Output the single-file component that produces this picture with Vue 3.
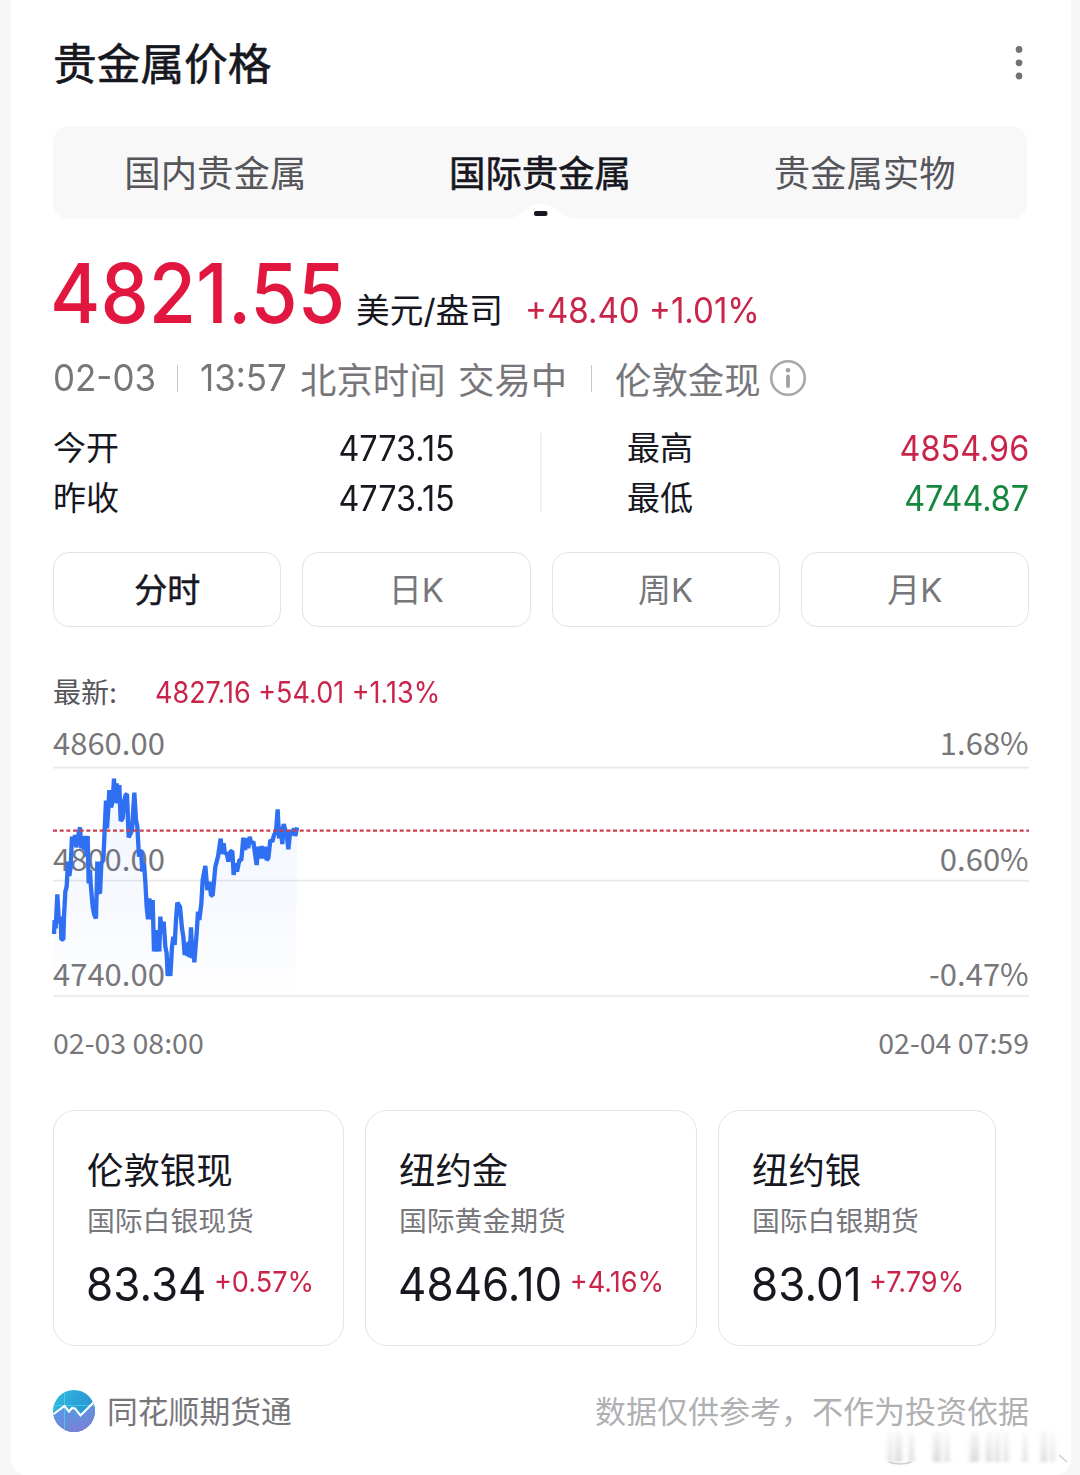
<template>
  <main class="card">
    <header class="head">
      <h1>贵金属价格</h1>
      <svg class="more" width="10" height="36" viewBox="0 0 10 36">
        <circle v-for="y in [4.5, 17.8, 31]" :key="y" cx="5" :cy="y" r="3.4" />
      </svg>
    </header>

    <nav class="tabs">
      <span v-for="tab in tabs" :key="tab" :class="{ active: tab === currentTab }">{{ tab }}</span>
      <svg class="notch" width="72" height="16" viewBox="0 0 72 16">
        <path d="M0 16 C18 15 20 1 36 1 S54 15 72 16Z" fill="#fff" />
        <rect x="29" y="8" width="13.5" height="5" rx="2" fill="#17171f" />
      </svg>
    </nav>

    <section class="price">
      <strong>4821.55</strong>
      <span class="unit">美元/盎司</span>
      <span class="change">+48.40 +1.01%</span>
    </section>

    <section class="meta">
      <span class="date">02-03</span>
      <i></i>
      <span class="clock">13:57</span>
      <span class="zone">北京时间</span>
      <span class="state">交易中</span>
      <i></i>
      <span class="market">伦敦金现</span>
      <svg width="38" height="38" viewBox="0 0 38 38">
        <circle cx="19" cy="19" r="16.8" fill="none" stroke="#a8a8a8" stroke-width="2.6" />
        <circle cx="19" cy="11.2" r="2.3" fill="#a0a0a0" />
        <path d="M19 17.5V27" stroke="#a0a0a0" stroke-width="3.8" stroke-linecap="round" />
      </svg>
    </section>

    <section class="stats">
      <div class="col">
        <p><span>今开</span><b>4773.15</b></p>
        <p><span>昨收</span><b>4773.15</b></p>
      </div>
      <div class="col right">
        <p><span>最高</span><b class="up">4854.96</b></p>
        <p><span>最低</span><b class="down">4744.87</b></p>
      </div>
    </section>

    <nav class="periods">
      <span v-for="p in periods" :key="p" :class="{ active: p === '分时' }">{{ p }}</span>
    </nav>

    <p class="latest"><span>最新:</span><b>4827.16 +54.01 +1.13%</b></p>

    <!-- three chart units to one css pixel -->
    <svg class="chart" width="976" height="290" viewBox="39 0 2928 870">
      <defs>
        <linearGradient id="area" x1="0" y1="0" x2="0" y2="1">
          <stop offset="0" stop-color="#2f6ff2" stop-opacity="0.06" />
          <stop offset="0.6" stop-color="#2f6ff2" stop-opacity="0.04" />
          <stop offset="1" stop-color="#2f6ff2" stop-opacity="0" />
        </linearGradient>
      </defs>
      <path v-for="y in [143, 482, 828]" :key="y" :d="`M39 ${y}H2967`" stroke="#e9e9eb" stroke-width="5" />
      <g class="axis">
        <template v-for="row in axis" :key="row.y">
          <text x="39" :y="row.y">{{ row.price }}</text>
          <text x="2966" :y="row.y" text-anchor="end">{{ row.percent }}</text>
        </template>
      </g>
      <polygon :points="`39,828 ${line} 768,828`" fill="url(#area)" />
      <polyline :points="line" fill="none" stroke="#2f6ff2" stroke-width="13" stroke-linejoin="bevel" />
      <path d="M39 332H2967" stroke="#c9414f" stroke-width="7" stroke-dasharray="12 8" />
    </svg>

    <div class="times"><span>02-03 08:00</span><span>02-04 07:59</span></div>

    <section class="quotes">
      <article v-for="q in quotes" :key="q.name" :style="{ width: q.width + 'px' }">
        <h2>{{ q.name }}</h2>
        <p>{{ q.desc }}</p>
        <div><strong>{{ q.price }}</strong><em>{{ q.change }}</em></div>
      </article>
    </section>

    <footer class="foot">
      <svg width="42" height="42" viewBox="0 0 42 42">
        <defs>
          <linearGradient id="sky" x1="0" y1="0" x2="1" y2="0.5">
            <stop offset="0" stop-color="#32bde0" />
            <stop offset="1" stop-color="#278fd2" />
          </linearGradient>
          <linearGradient id="hill" x1="0.2" y1="0" x2="0.6" y2="1">
            <stop offset="0" stop-color="#4f9fe4" />
            <stop offset="1" stop-color="#7b7fd6" />
          </linearGradient>
          <clipPath id="disc"><circle cx="21" cy="21" r="21" /></clipPath>
        </defs>
        <g clip-path="url(#disc)">
          <path d="M0 0H42V42H0Z" fill="url(#sky)" />
          <path d="M0 25 11 16 16 22 19 18 27 26 42 12V42H0Z" fill="url(#hill)" />
          <path d="M11.5 0V42M0 15.500H42" stroke="#43dce8" stroke-width="1" opacity="0.7" />
          <path d="M0 24.500 11.500 16 16 21.500 19 18 22 18.500 27.500 25.500 41 12" fill="none" stroke="#fff" stroke-width="2.1" />
        </g>
      </svg>
      <span class="brand">同花顺期货通</span>
      <span class="notice">数据仅供参考，不作为投资依据</span>
    </footer>

    <svg class="smudge" width="190" height="40" viewBox="0 0 190 40">
      <defs>
        <filter id="soft"><feGaussianBlur stdDeviation="2 1.4" /></filter>
        <linearGradient id="fade" x1="0" y1="0" x2="0" y2="1">
          <stop offset="0" stop-color="#999" stop-opacity="0.08" />
          <stop offset="1" stop-color="#999" stop-opacity="0.36" />
        </linearGradient>
      </defs>
      <g filter="url(#soft)" fill="url(#fade)">
        <rect v-for="s in stripes" :key="s[0]" :x="s[0]" y="3" :width="s[1]" height="30" />
      </g>
      <path d="M8 33Q19 37 30 33M178 26L186 33" fill="none" stroke="#bbb" stroke-width="1.5" opacity="0.7" />
    </svg>
  </main>
</template>

<script setup>
import { ref } from "vue";

const tabs = ["国内贵金属", "国际贵金属", "贵金属实物"];
const currentTab = ref("国际贵金属");
const periods = ["分时", "日K", "周K", "月K"];

const axis = [
  { y: 105, price: "4860.00", percent: "1.68%" },
  { y: 452, price: "4800.00", percent: "0.60%" },
  { y: 797, price: "4740.00", percent: "-0.47%" },
];

const quotes = [
  { name: "伦敦银现", desc: "国际白银现货", price: "83.34", change: "+0.57%", width: 291 },
  { name: "纽约金", desc: "国际黄金期货", price: "4846.10", change: "+4.16%", width: 332 },
  { name: "纽约银", desc: "国际白银期货", price: "83.01", change: "+7.79%", width: 278 },
];

const line =
  "42,642 44,600 47,625 52,523 57,610 62,590 64,658 70,658 72,590 76,515 80,500 84,425 88,468 92,440 96,350 101,375 105,345 109,382 115,345 120,322 124,385 129,350 132,390 136,348 140,410 143,348 146,490 150,450 152,490 158,560 163,585 168,595 " +
  "172,425 176,515 180,520 184,430 190,420 194,330 198,242 201,325 205,265 208,210 213,262 218,245 222,176 225,248 230,190 233,250 238,195 242,303 248,295 253,240 257,225 261,222 266,352 272,340 276,330 283,218 288,300 292,320 297,410 303,390 307,455 312,430 " +
  "316,485 320,560 324,598 328,535 333,598 338,540 342,694 347,630 350,695 354,640 358,694 361,590 366,640 371,605 376,680 380,700 383,768 387,715 391,768 396,680 400,650 404,675 408,600 412,548 420,560 426,625 430,650 434,705 439,670 442,708 446,665 449,712 453,622 457,715 460,665 463,727 470,640 " +
  "474,575 478,600 484,550 488,480 496,438 502,510 508,485 513,525 518,527 526,440 534,410 542,356 547,402 551,370 555,402 560,398 565,425 571,395 577,393 581,465 586,430 591,455 598,420 604,420 " +
  "610,353 615,390 621,355 625,385 629,350 634,370 640,365 645,400 650,435 655,380 660,415 665,378 670,415 675,380 680,420 685,415 691,360 697,365 702,345 708,335 713,268 717,355 722,320 727,372 731,312 736,330 741,350 745,388 751,330 757,345 762,325 766,348 771,322";

// x offset and width
const stripes = [[7, 4], [14, 7], [28, 5], [52, 8], [64, 4], [89, 9], [105, 6], [114, 5], [123, 4], [142, 4], [160, 6], [170, 3]];
</script>

<style>
body {
  margin: 0;
  background: #f7f7f7;
}
</style>

<style scoped>
.card {
  position: relative;
  box-sizing: border-box;
  width: 1060px;
  height: 1475px;
  margin-left: 11px;
  padding: 0 42px;
  overflow: hidden;
  background: #fff;
  border-radius: 0 0 16px 16px;
  color: #17171f;
  font-family: Inter, "Noto Sans CJK SC", sans-serif;
  white-space: nowrap;
}
h1,
h2,
p {
  margin: 0;
  font-weight: 400;
}
b,
em,
strong {
  font-weight: 400;
  font-style: normal;
}
.head {
  display: flex;
  justify-content: space-between;
  align-items: center;
  height: 126px;
}
h1 {
  padding-top: 3px;
  font-size: 43.7px;
  line-height: 60px;
  -webkit-text-stroke: 0.6px;
}
.more {
  margin-right: 5px;
  fill: #737373;
}
.tabs {
  position: relative;
  display: grid;
  grid-template-columns: repeat(3, 1fr);
  width: 974px;
  height: 93px;
  border-radius: 16px;
  background: #f8f8f8;
  color: #55555a;
  font-size: 36.4px;
  line-height: 96px;
  text-align: center;
}
.tabs .active {
  color: #17171f;
  -webkit-text-stroke: 0.6px;
}
.notch {
  position: absolute;
  left: 452px;
  bottom: 0;
}
.price {
  display: flex;
  align-items: baseline;
  height: 131px;
  line-height: 148px;
}
/* numerals are set slightly condensed */
.price strong,
.change,
.date,
.clock,
.col b,
.latest b,
article div {
  transform: scaleX(0.925);
  transform-origin: left;
}
.price strong {
  width: 306px;
  margin-left: -3px;
  color: #e2173f;
  font-size: 83px;
  font-weight: 500;
}
.unit {
  width: 169px;
  font-size: 33.7px;
}
.change {
  color: #c9254a;
  font-size: 35px;
  transform: scaleX(0.945);
}
.meta {
  display: flex;
  align-items: center;
  height: 56px;
  padding-bottom: 2px;
  color: #77777b;
  font-size: 36.4px;
}
.meta i {
  width: 1px;
  height: 27px;
  margin-right: 1px;
  background: #c8c8c8;
}
.date {
  width: 124px;
  transform: scaleX(0.96);
}
.clock {
  width: 100px;
  margin-left: 21px;
  transform: scaleX(0.96);
}
.zone {
  width: 158px;
}
.state {
  width: 133px;
}
.market {
  margin: 0 8px 0 22px;
}
.stats {
  display: flex;
  margin-top: 15px;
}
.col {
  width: 402px;
  height: 100px;
}
.col p {
  display: flex;
  justify-content: space-between;
  height: 50px;
  font-size: 33px;
  line-height: 50px;
}
.col b {
  font-size: 35px;
  transform-origin: right;
}
.right {
  position: relative;
  margin-left: 172px;
}
.right::before {
  content: "";
  position: absolute;
  left: -87px;
  top: 10px;
  width: 2px;
  height: 79px;
  background: #f0f0f0;
}
.up {
  color: #c9254a;
}
.down {
  color: #15873f;
}
.periods {
  display: grid;
  grid-template-columns: repeat(4, 1fr);
  gap: 21px;
  margin-top: 29px;
}
.periods span {
  box-sizing: border-box;
  height: 75px;
  border: 1px solid #e2e2e4;
  border-radius: 16px;
  color: #77777b;
  font-size: 33px;
  line-height: 74px;
  text-align: center;
}
.periods .active {
  color: #17171f;
  -webkit-text-stroke: 0.5px;
}
.latest {
  display: flex;
  height: 40px;
  margin-top: 46px;
  color: #55555a;
  font-size: 28px;
  line-height: 41px;
}
.latest span {
  width: 102px;
}
.latest b {
  color: #c9254a;
  font-size: 29.5px;
  line-height: 39px;
  transform: scaleX(0.915);
}
.chart {
  display: block;
  margin-top: 7px;
  overflow: visible;
}
.axis {
  fill: #77777b;
  font: 93px "Noto Sans CJK SC", sans-serif;
}
.times {
  display: flex;
  justify-content: space-between;
  height: 40px;
  margin-top: 12px;
  color: #77777b;
  font: 28.5px/40px "Noto Sans CJK SC", sans-serif;
}
.quotes {
  display: flex;
  gap: 21px;
  margin-top: 48px;
}
article {
  box-sizing: border-box;
  height: 236px;
  padding: 33px 0 0 33px;
  border: 1px solid #e4e4e6;
  border-radius: 22px;
}
h2 {
  font-size: 36.4px;
  line-height: 54px;
}
article p {
  color: #77777b;
  font-size: 27.8px;
  line-height: 46px;
}
article div {
  display: flex;
  align-items: center;
  width: max-content;
  height: 78px;
  transform: scaleX(0.935);
}
article strong {
  margin-left: -1px;
  font-size: 47px;
}
article em {
  margin: 0 0 4px 8px;
  color: #c9254a;
  font-size: 29px;
}
.foot {
  display: flex;
  align-items: center;
  height: 60px;
  margin-top: 35px;
  color: #77777b;
  font-size: 30.8px;
}
.brand {
  margin-left: 12px;
}
.brand,
.notice {
  padding-bottom: 3px;
}
.notice {
  margin-left: auto;
  color: #b0b0b3;
  font-size: 31px;
}
.smudge {
  position: absolute;
  left: 870px;
  top: 1429px;
}
</style>
